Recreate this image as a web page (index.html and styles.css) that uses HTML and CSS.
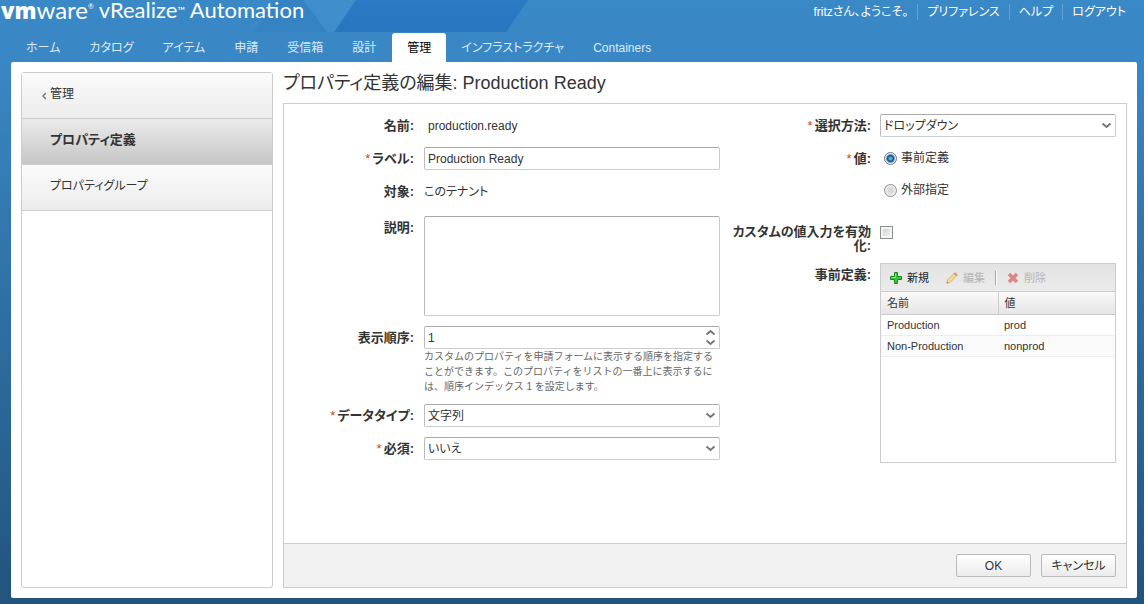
FILE: index.html
```html
<!DOCTYPE html>
<html lang="ja">
<head>
<meta charset="utf-8">
<title>vRealize Automation</title>
<link rel="stylesheet" href="styles.css">
</head>
<body>
<header class="header">
  <svg class="header-art" width="280" height="32" viewBox="0 0 280 32" aria-hidden="true">
    <defs><linearGradient id="deep" x1="0" y1="0" x2="0" y2="1"><stop offset="0" stop-color="#2a7ac4"/><stop offset="1" stop-color="#2876bf"/></linearGradient></defs>
    <path d="M4 32 25 0H54L78 32Z" fill="#3583c3"/>
    <path d="M53 0H106L84 32H77Z" fill="#408ecb"/>
    <path d="M106 0H278L256 32H84Z" fill="url(#deep)"/>
  </svg>
  <div class="brand-row">
    <h1 class="brand"><span class="brand-vm">vm</span><span class="brand-ware">ware</span><span class="brand-mark">®</span><span class="brand-product">vRealize<span class="brand-tm">™</span> Automation</span></h1>
    <div class="user-links">
      <span class="user-item">fritzさん、ようこそ。</span>
      <a class="user-item" href="#">プリファレンス</a>
      <a class="user-item" href="#">ヘルプ</a>
      <a class="user-item" href="#">ログアウト</a>
    </div>
  </div>
  <nav class="tabs">
    <a class="tab" href="#">ホーム</a>
    <a class="tab" href="#">カタログ</a>
    <a class="tab" href="#">アイテム</a>
    <a class="tab" href="#">申請</a>
    <a class="tab" href="#">受信箱</a>
    <a class="tab" href="#">設計</a>
    <a class="tab tab-active" href="#" aria-current="page">管理</a>
    <a class="tab" href="#">インフラストラクチャ</a>
    <a class="tab" href="#">Containers</a>
  </nav>
</header>
<div class="panel">
  <nav class="sidebar">
    <a class="side-item side-back" href="#"><svg class="back-icon" width="5" height="8" viewBox="0 0 5 8" aria-hidden="true"><path d="M4 1 1 4 4 7" fill="none" stroke="#777" stroke-width="1.4"/></svg>管理</a>
    <a class="side-item side-active" href="#">プロパティ定義</a>
    <a class="side-item" href="#">プロパティグループ</a>
  </nav>
  <main class="main">
    <h2 class="title">プロパティ定義の編集: Production Ready</h2>
    <form class="editor">
      <div class="fields">
        <div class="column column-left">
          <div class="row">
            <span class="label">名前:</span>
            <span class="value value-inset">production.ready</span>
          </div>
          <div class="row">
            <label class="label" for="label"><span class="req">*</span>ラベル:</label>
            <input class="control" id="label" type="text" value="Production Ready">
          </div>
          <div class="row row-target">
            <span class="label">対象:</span>
            <span class="value">このテナント</span>
          </div>
          <div class="row">
            <label class="label" for="desc">説明:</label>
            <textarea class="control area" id="desc"></textarea>
          </div>
          <div class="row">
            <label class="label" for="order">表示順序:</label>
            <div>
              <div class="picker">
                <input class="control" id="order" type="text" inputmode="numeric" value="1">
                <svg class="picker-icon" width="11" height="17" viewBox="0 0 11 17" aria-hidden="true"><path d="M1.500 5.500 5.500 2 9.500 5.500M1.500 11.500 5.500 15 9.500 11.500" fill="none" stroke="#777" stroke-width="2"/></svg>
              </div>
              <p class="hint">カスタムのプロパティを申請フォームに表示する順序を指定する<br>ことができます。このプロパティをリストの一番上に表示するに<br>は、順序インデックス 1 を設定します。</p>
            </div>
          </div>
          <div class="row">
            <label class="label" for="type"><span class="req">*</span>データタイプ:</label>
            <div class="picker">
              <select class="control" id="type"><option>文字列</option></select>
              <svg class="picker-icon" width="11" height="17" viewBox="0 0 11 17" aria-hidden="true"><path d="M1.500 6.500 5.500 10 9.500 6.500" fill="none" stroke="#777" stroke-width="2"/></svg>
            </div>
          </div>
          <div class="row">
            <label class="label" for="required"><span class="req">*</span>必須:</label>
            <div class="picker">
              <select class="control" id="required"><option>いいえ</option></select>
              <svg class="picker-icon" width="11" height="17" viewBox="0 0 11 17" aria-hidden="true"><path d="M1.500 6.500 5.500 10 9.500 6.500" fill="none" stroke="#777" stroke-width="2"/></svg>
            </div>
          </div>
        </div>
        <div class="column column-right">
          <div class="row">
            <label class="label" for="method"><span class="req">*</span>選択方法:</label>
            <div class="picker">
              <select class="control" id="method"><option>ドロップダウン</option></select>
              <svg class="picker-icon" width="11" height="17" viewBox="0 0 11 17" aria-hidden="true"><path d="M1.500 6.500 5.500 10 9.500 6.500" fill="none" stroke="#777" stroke-width="2"/></svg>
            </div>
          </div>
          <div class="row row-values">
            <span class="label"><span class="req">*</span>値:</span>
            <div class="radios">
              <label class="radio-line"><input class="radio" type="radio" name="source" checked>事前定義</label>
              <label class="radio-line"><input class="radio" type="radio" name="source">外部指定</label>
            </div>
          </div>
          <div class="row">
            <label class="label label-wrap" for="custom">カスタムの値入力を有効化:</label>
            <input class="check" id="custom" type="checkbox">
          </div>
          <div class="row">
            <span class="label">事前定義:</span>
            <div class="grid-box">
              <div class="toolbar">
                <button class="tool" type="button"><svg width="12" height="12" viewBox="0 0 12 12" aria-hidden="true"><path d="M4.500.500h3v4h4v3h-4v4h-3v-4h-4v-3h4Z" fill="#3fc43f" stroke="#158a1c"/><path d="M5.500 1.500v4h-4" fill="none" stroke="#8be68a"/></svg>新規</button>
                <button class="tool" type="button" disabled><svg width="12" height="12" viewBox="0 0 12 12" aria-hidden="true"><path d="M1.500 8 8 1.500 10.500 4 4 10.500 1 11Z" fill="#f5dc8c" stroke="#c9a878" stroke-width=".8"/><path d="M8 1.500 9 .500 11.500 3 10.500 4Z" fill="#e8a09a" stroke="#cf8f88" stroke-width=".8"/><path d="M.500 11.500 1 9.500 2.500 11Z" fill="#888"/></svg>編集</button>
                <span class="tool-sep"></span>
                <button class="tool" type="button" disabled><svg width="12" height="12" viewBox="0 0 12 12" aria-hidden="true"><path d="M2 2 10 10M10 2 2 10" stroke="#dc8585" stroke-width="3.400"/></svg>削除</button>
              </div>
              <table class="table">
                <thead><tr><th>名前</th><th>値</th></tr></thead>
                <tbody>
                  <tr><td>Production</td><td>prod</td></tr>
                  <tr><td>Non-Production</td><td>nonprod</td></tr>
                </tbody>
              </table>
            </div>
          </div>
        </div>
      </div>
      <div class="actions">
        <button class="button" type="button">OK</button>
        <button class="button" type="button">キャンセル</button>
      </div>
    </form>
  </main>
</div>
</body>
</html>
```
FILE: styles.css
```css
* { box-sizing: border-box; }

body {
  margin: 0;
  min-height: 100vh;
  display: flex;
  flex-direction: column;
  padding-bottom: 6px;
  background: #22547c linear-gradient(#3989c6 0, #3987c4 62px, #22547c 100%) no-repeat;
  color: #333;
  font: 12px/16px "Liberation Sans", "Noto Sans CJK JP", sans-serif;
  font-feature-settings: "palt";
}

a { color: inherit; text-decoration: none; }

input, select, textarea, button {
  font: inherit;
  font-feature-settings: inherit;
  color: inherit;
  margin: 0;
}

/* Header */
.header { position: relative; height: 62px; color: #fff; white-space: nowrap; }
.header-art { position: absolute; left: 250px; top: 0; }
.brand-row {
  position: relative;
  display: flex;
  justify-content: space-between;
  height: 33px;
  padding: 0 18px 0 1px;
}
.brand {
  display: flex;
  margin: 0;
  font: 400 23px/20px Lato, "Open Sans", sans-serif;
}
.brand-vm { font-family: "Open Sans", sans-serif; font-weight: 800; font-size: 22px; }
.brand-ware { font-size: 24px; }
.brand-mark { font-size: 7px; line-height: 12px; }
.brand-product { margin-left: 5px; font-size: 22px; font-family: Lato, sans-serif; }
.brand-tm { font-size: 10px; vertical-align: 4px; line-height: 1px; }

.user-links { display: flex; padding-top: 4px; }
.user-item { padding: 0 9px; height: 16px; line-height: 17px; }
.user-item:last-child { padding-right: 0; }
.user-item + .user-item { border-left: 1px solid #62a3d6; }

.tabs { position: relative; display: flex; gap: 1px; padding-left: 12px; }
.tab {
  height: 29px;
  padding: 0 14px;
  border-radius: 3px 3px 0 0;
  line-height: 31px;
  color: #dcebf7;
}
.tab-active { margin-left: 1px; padding: 0 15px; background: #fff; color: #000; }

/* Page body */
.panel {
  flex: 1;
  display: flex;
  gap: 10px;
  margin: 0 7px 0 11px;
  padding: 10px;
  border-radius: 2px;
  background: #fff;
}
.sidebar {
  flex: 0 0 252px;
  border: 1px solid #ccc;
  border-radius: 3px;
}
.side-item {
  display: flex;
  align-items: center;
  height: 46px;
  padding: 0 28px 4px;
  border-bottom: 1px solid #ccc;
  background: linear-gradient(#fbfbfb, #ececec);
}
.side-back { padding-left: 20px; gap: 3px; }
.back-icon { margin-top: 4px; }
.side-active { background: linear-gradient(#ebebeb, #c6c6c6); font-weight: 700; font-size: 13px; }

.main { flex: 1; min-width: 0; display: flex; flex-direction: column; }
.title { margin: 0 0 9px; font-size: 18px; line-height: 22px; font-weight: 400; white-space: nowrap; }
.editor { flex: 1; display: flex; flex-direction: column; border: 1px solid #ccc; }
.fields { flex: 1; display: flex; gap: 11px; padding: 10px 10px 10px 0; }

.column { display: flex; flex-direction: column; gap: 10px; min-width: 0; }
.column-left { flex: 436 1 0; }
.column-right { flex: 385 1 0; }
.row { display: grid; grid-template-columns: 130px 1fr; column-gap: 10px; min-height: 23px; align-items: start; }
.column-right .row { grid-template-columns: 140px 1fr; column-gap: 9px; }
.row-target { min-height: 26px; }
.row-values { min-height: 67px; }

.label { padding-top: 4px; font-size: 13px; font-weight: 700; text-align: right; white-space: nowrap; }
.label-wrap { line-height: 14px; padding-top: 1px; white-space: normal; }
.req { color: #d4430c; font-weight: 400; margin-right: 2px; }
.value { padding-top: 4px; }
.value-inset { padding-left: 4px; }

.control {
  display: block;
  width: 100%;
  height: 23px;
  padding: 0 3px;
  border: 1px solid #ccc;
  border-top-color: #aaa;
  border-left-color: #bbb;
  border-radius: 2px;
  background: #fff;
  appearance: none;
}
.area { height: 100px; resize: none; }
.picker { position: relative; }
.picker-icon { position: absolute; right: 4px; top: 3px; pointer-events: none; }
.hint { margin: 0; font-size: 10px; line-height: 15px; color: #666; white-space: nowrap; font-feature-settings: normal; }

.radios { display: flex; flex-direction: column; gap: 10px; }
.radio-line { display: flex; align-items: center; gap: 4px; height: 22px; padding-left: 4px; }
.radio {
  appearance: none;
  width: 13px;
  height: 13px;
  border: 1px solid #8e8f8f;
  border-radius: 50%;
  background: radial-gradient(circle, #d8d8d8 0 2px, #f4f4f4 6px);
}
.radio:checked { background: radial-gradient(circle at 50% 50%, #4fb5e8 0 1px, #134f80 3px, #e8eef2 5px); border-color: #6e7a85; }
.check {
  appearance: none;
  width: 13px;
  height: 13px;
  margin-top: 2px;
  border: 1px solid #8e8f8f;
  background: linear-gradient(135deg, #cdcfd4, #f6f6f6);
  box-shadow: inset 0 0 0 2px #f4f4f4;
}

/* Value list */
.grid-box { height: 200px; border: 1px solid #ccc; font-size: 11px; }
.toolbar { display: flex; align-items: center; height: 27px; padding-left: 9px; background: linear-gradient(#e3e3e3, #ebebeb); white-space: nowrap; }
.tool { display: flex; align-items: center; gap: 5px; padding: 0; border: 0; background: none; font-size: 11px; color: #222; }
.tool + .tool { margin-left: 17px; }
.tool:disabled { color: #b5b5b5; }
.tool-sep { width: 2px; height: 14px; margin: 0 10px; border-left: 1px solid #aaa; border-right: 1px solid #fff; }
.table { width: 100%; table-layout: fixed; border-collapse: collapse; }
.table th, .table td { height: 21px; padding: 0 6px; text-align: left; font-weight: 400; line-height: 16px; }
.table thead tr { background: linear-gradient(#f9f9f9, #e5e5e5); }
.table th { height: 23px; border-top: 1px solid #ccc; border-bottom: 1px solid #ccc; }
.table th + th { border-left: 1px solid #ccc; }
.table td { border-bottom: 1px solid #ededed; }
.table tbody tr:nth-child(even) { background: #fafafa; }

.actions {
  display: flex;
  justify-content: flex-end;
  gap: 10px;
  padding: 10px;
  border-top: 1px solid #ccc;
  background: #f2f2f2;
}
.button {
  width: 75px;
  height: 23px;
  padding: 0;
  border: 1px solid #bbb;
  border-radius: 2px;
  background: linear-gradient(#fff, #ebebeb);
  white-space: nowrap;
}
```
